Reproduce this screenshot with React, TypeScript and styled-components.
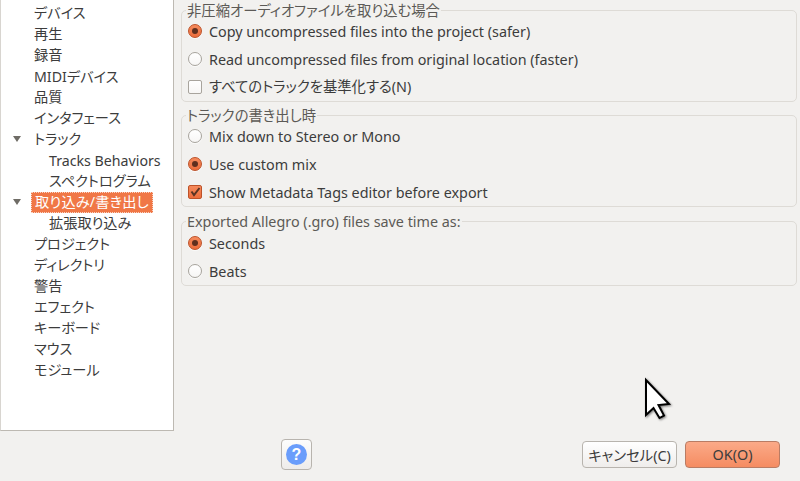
import { createGlobalStyle } from "styled-components";
import styled from "styled-components";

const GlobalStyle = createGlobalStyle`
  html, body {
    margin: 0;
    padding: 0;
    background: #f2f1ef;
  }
  body {
    font-family: "Noto Sans", "Noto Sans CJK JP", sans-serif;
    font-size: 14.35px;
    font-feature-settings: "palt";
    color: #3c3c3c;
  }
`

const Dialog = styled.div`
  position: relative;
  width: 800px;
  height: 481px;
  overflow: hidden;
  background: #f2f1ef;
`

const Body = styled.div`
  display: flex;
  height: 431px;
`

const Tree = styled.ul`
  box-sizing: border-box;
  width: 174px;
  height: 431px;
  margin: 0;
  padding: 3px 0 0;
  list-style: none;
  background: #fff;
  border-left: 1px solid #d8d5d0;
  border-right: 1px solid #bdb9b2;
  border-bottom: 1px solid #bdb9b2;
`

const TreeRow = styled.li<{ $child?: boolean; $raised?: boolean }>`
  box-sizing: border-box;
  display: flex;
  align-items: center;
  height: 21px;
  padding-left: ${(p) => (p.$child ? 48 : 33)}px;
  padding-bottom: ${(p) => (p.$raised ? 2 : 0)}px;
  position: relative;
  white-space: nowrap;
  font-size: 14.2px;
  line-height: 17px;
`

const Arrow = styled.span`
  position: absolute;
  left: 12px;
  top: 7px;
  width: 0;
  height: 0;
  border-left: 4px solid transparent;
  border-right: 4px solid transparent;
  border-top: 6px solid #6f6c66;
`

const TreeLabel = styled.span<{ $selected?: boolean }>`
  ${(p) =>
    p.$selected
      ? `
    margin-left: -3px;
    padding: 0 3px 2px 3px;
    height: 17px;
    line-height: 17px;
    letter-spacing: 0.2px;
    color: #fff;
    background: #f07746;
    border: 1px dotted #f9d3c3;
  `
      : ""}
`

const Panels = styled.div`
  flex: 1;
  padding: 10px 3px 0 7px;
`

const Group = styled.section<{ $rows: number; $inset?: number; $gap?: number }>`
  position: relative;
  box-sizing: border-box;
  height: ${(p) => p.$rows * 28 + (p.$inset ?? 6) + 2}px;
  padding-top: ${(p) => p.$inset ?? 6}px;
  margin-bottom: ${(p) => p.$gap ?? 13}px;
  border: 1px solid #dedbd6;
  border-radius: 5px;
`

const Legend = styled.span`
  position: absolute;
  left: 4px;
  top: -9px;
  padding: 0 1px;
  line-height: 17px;
  background: #f2f1ef;
  white-space: nowrap;
  color: #5c5a56;
`

const OptionRow = styled.div`
  display: flex;
  align-items: center;
  height: 28px;
  padding-left: 6px;
  line-height: 17px;
  white-space: nowrap;
`

const OptionText = styled.span<{ $raised?: boolean }>`
  margin-left: 7px;
  padding-bottom: ${(p) => (p.$raised ? 2 : 0)}px;
`

const Radio = styled.span<{ $on?: boolean }>`
  box-sizing: border-box;
  display: flex;
  align-items: center;
  justify-content: center;
  width: 14px;
  height: 14px;
  border-radius: 50%;
  border: 1px solid ${(p) => (p.$on ? "#bd5229" : "#a8a49d")};
  background: ${(p) => (p.$on ? "linear-gradient(#f58a5c, #ec6d3c)" : "linear-gradient(#fff, #f7f6f5)")};
  box-shadow: 0 1px 1px rgba(255, 255, 255, 0.7);

  &::after {
    content: "";
    display: ${(p) => (p.$on ? "block" : "none")};
    width: 6px;
    height: 6px;
    border-radius: 50%;
    background: #5f2f1e;
  }
`

const Check = styled.span<{ $on?: boolean }>`
  box-sizing: border-box;
  display: block;
  width: 14px;
  height: 14px;
  border-radius: 2px;
  border: 1px solid ${(p) => (p.$on ? "#bd5229" : "#a8a49d")};
  background: ${(p) => (p.$on ? "linear-gradient(#f58a5c, #ec6d3c)" : "linear-gradient(#fff, #f7f6f5)")};

  svg {
    display: block;
  }
`

const Footer = styled.div`
  display: flex;
  align-items: center;
  height: 46px;
  padding: 0 20px 0 281px;
`

const HelpButton = styled.button`
  box-sizing: border-box;
  display: flex;
  align-items: center;
  justify-content: center;
  width: 31px;
  height: 31px;
  margin-right: auto;
  padding: 0;
  border: 1px solid #b8b4ae;
  border-radius: 4px;
  background: linear-gradient(#fdfdfc, #eeecea);
`

const HelpIcon = styled.span`
  display: block;
  width: 21px;
  height: 21px;
  border-radius: 50%;
  background: #6a9dfb;
  color: #fff;
  font-weight: 700;
  font-size: 16px;
  line-height: 21px;
  text-align: center;
`

const ActionButton = styled.button<{ $primary?: boolean }>`
  box-sizing: border-box;
  width: 95px;
  height: 27px;
  margin-left: ${(p) => (p.$primary ? 8 : 0)}px;
  padding: 0;
  font: inherit;
  color: #3c3c3c;
  border: 1px solid ${(p) => (p.$primary ? "#b97c64" : "#b8b4ae")};
  border-radius: 4px;
  background: ${(p) => (p.$primary ? "linear-gradient(#fbaa88, #f58c62)" : "linear-gradient(#fff, #efedeb)")};
`

const Pointer = styled.svg`
  position: absolute;
  left: 640px;
  top: 376px;
  filter: drop-shadow(1px 1px 1px rgba(0, 0, 0, 0.5));
`

const items: { label: string; child?: boolean; open?: boolean; selected?: boolean; latin?: boolean }[] = [
  { label: "デバイス" },
  { label: "再生" },
  { label: "録音" },
  { label: "MIDIデバイス", latin: true },
  { label: "品質" },
  { label: "インタフェース" },
  { label: "トラック", open: true },
  { label: "Tracks Behaviors", child: true, latin: true },
  { label: "スペクトログラム", child: true },
  { label: "取り込み/書き出し", open: true, selected: true },
  { label: "拡張取り込み", child: true },
  { label: "プロジェクト" },
  { label: "ディレクトリ" },
  { label: "警告" },
  { label: "エフェクト" },
  { label: "キーボード" },
  { label: "マウス" },
  { label: "モジュール" },
];

const CheckMark = () => (
  <svg width="12" height="12" viewBox="0 0 12 12">
    <path d="M2.5 5.5 L5 9 L10.5 2" fill="none" stroke="#5a3424" strokeWidth="2" />
  </svg>
);

export default function App() {
  return (
    <Dialog>
      <GlobalStyle />
      <Body>
        <Tree>
          {items.map((item) => (
            <TreeRow key={item.label} $child={item.child} $raised={!item.latin && !item.selected}>
              {item.open && <Arrow />}
              <TreeLabel $selected={item.selected}>{item.label}</TreeLabel>
            </TreeRow>
          ))}
        </Tree>
        <Panels>
          <Group $rows={3}>
            <Legend>非圧縮オーディオファイルを取り込む場合</Legend>
            <OptionRow>
              <Radio $on />
              <OptionText>Copy uncompressed files into the project (safer)</OptionText>
            </OptionRow>
            <OptionRow>
              <Radio />
              <OptionText>Read uncompressed files from original location (faster)</OptionText>
            </OptionRow>
            <OptionRow>
              <Check />
              <OptionText $raised>すべてのトラックを基準化する(N)</OptionText>
            </OptionRow>
          </Group>
          <Group $rows={3} $gap={14}>
            <Legend>トラックの書き出し時</Legend>
            <OptionRow>
              <Radio />
              <OptionText>Mix down to Stereo or Mono</OptionText>
            </OptionRow>
            <OptionRow>
              <Radio $on />
              <OptionText>Use custom mix</OptionText>
            </OptionRow>
            <OptionRow>
              <Check $on>
                <CheckMark />
              </Check>
              <OptionText>Show Metadata Tags editor before export</OptionText>
            </OptionRow>
          </Group>
          <Group $rows={2} $inset={7}>
            <Legend>Exported Allegro (.gro) files save time as:</Legend>
            <OptionRow>
              <Radio $on />
              <OptionText>Seconds</OptionText>
            </OptionRow>
            <OptionRow>
              <Radio />
              <OptionText>Beats</OptionText>
            </OptionRow>
          </Group>
        </Panels>
      </Body>
      <Footer>
        <HelpButton>
          <HelpIcon>?</HelpIcon>
        </HelpButton>
        <ActionButton>キャンセル(C)</ActionButton>
        <ActionButton $primary>OK(O)</ActionButton>
      </Footer>
      <Pointer width="34" height="46" viewBox="0 0 34 46">
        <path d="M6 4 L6 39 L13.5 32 L19.5 42 L24 39.5 L18.5 29 L29 28 Z" fill="#fff" stroke="#000" strokeWidth="2" />
      </Pointer>
    </Dialog>
  );
}
